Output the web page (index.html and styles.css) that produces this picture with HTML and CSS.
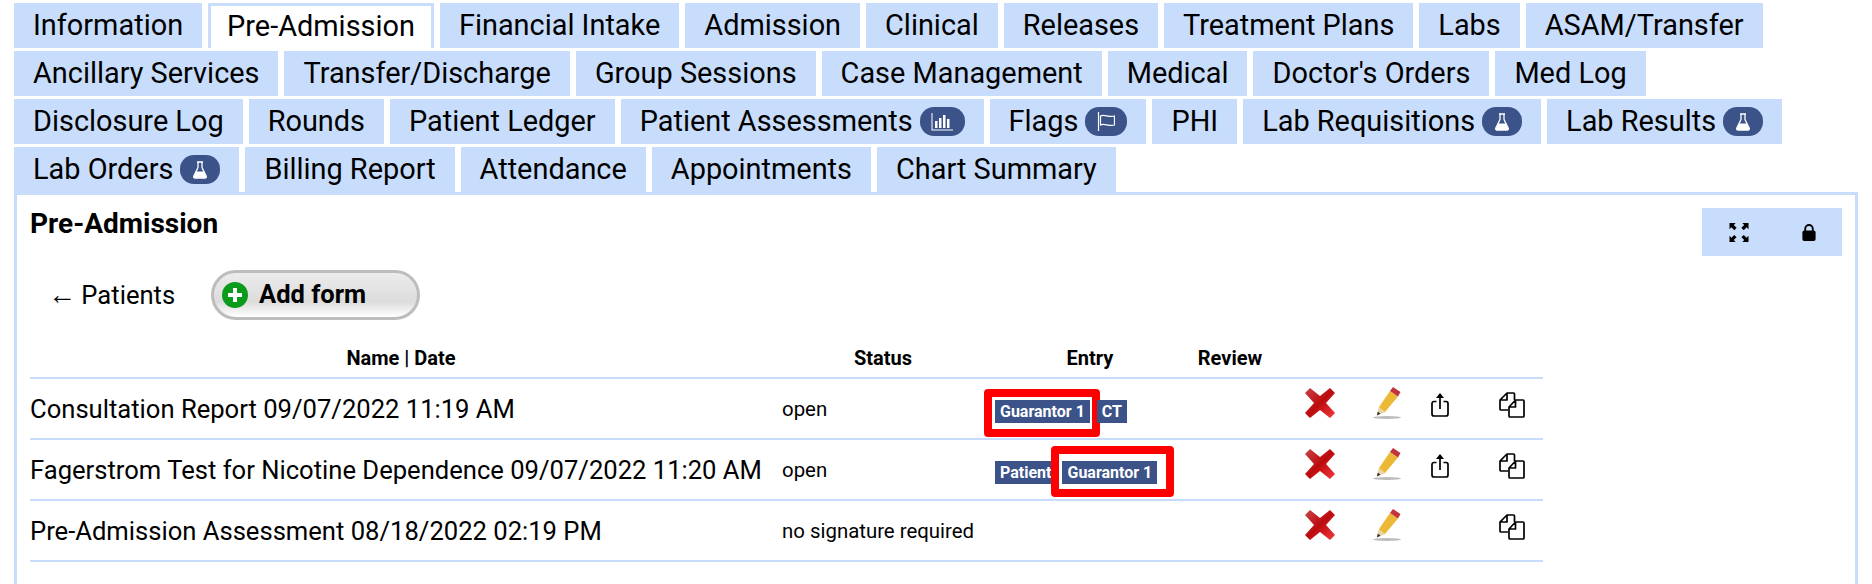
FILE: index.html
```html
<!DOCTYPE html>
<html lang="en">

<head>
    <meta charset="UTF-8">
    <link rel="stylesheet" href="styles.css">
    <title>Pre-Admission</title>
</head>

<body>
    <svg class="defs" width="0" height="0">
        <defs>
            <symbol id="flask" viewBox="0 0 16 18">
                <path d="M5 1h6M6 1.500v5L1.800 15c-.5 1 .1 2 1.200 2h10c1.100 0 1.700-1 1.200-2L10 6.500v-5" fill="none" stroke="#fff" stroke-width="1.300"/>
                <path d="M4.200 10.500h7.600l2.400 5c.3.800-.2 1.500-1.200 1.500H3c-1 0-1.500-.7-1.200-1.500z" fill="#fff"/>
            </symbol>
            <linearGradient id="redX" x1="0" y1="0" x2="1" y2="1">
                <stop offset="0" stop-color="#c9444a"/>
                <stop offset=".5" stop-color="#bb0b0e"/>
                <stop offset="1" stop-color="#f63a3e"/>
            </linearGradient>
            <symbol id="del" viewBox="0 0 30 30">
                <path d="M5 0l10 8 10-8 5 5-9 10 9 10-5 5-10-8-10 8-5-5 9-10-9-10z" fill="url(#redX)"/>
            </symbol>
            <symbol id="pencil" viewBox="0 0 28 32">
                <ellipse cx="14" cy="30.500" rx="14" ry="1.500" fill="#bbb"/>
                <path d="M17 4l8 5.500L12 25l-7.500 2.500L6 20z" fill="#ecb936"/>
                <path d="M20 0l7.500 5-2.500 4.500L17 4z" fill="#c2343c"/>
                <path d="M6 20l6 5-8 3.500z" fill="#e9d6ab"/>
                <path d="M4.800 24.500l2.700 2.200-3.700 1.800z" fill="#333"/>
            </symbol>
            <symbol id="share" viewBox="0 0 18 24">
                <path d="M5.500 8.500H3a2 2 0 0 0-2 2V21a2 2 0 0 0 2 2h12a2 2 0 0 0 2-2V10.500a2 2 0 0 0-2-2h-2.500M9 16V2" fill="none" stroke="#000" stroke-width="1.700"/>
                <path d="M9 0l4 5H5z"/>
            </symbol>
            <symbol id="copy" viewBox="0 0 26 26">
                <path d="M9 18H2a1 1 0 0 1-1-1V8l7-7h6.500a1 1 0 0 1 1 1v6M8 1v7H1" fill="none" stroke="#000" stroke-width="1.700" stroke-linejoin="round"/>
                <path d="M10 15l6.500-7H24a1 1 0 0 1 1 1v15a1 1 0 0 1-1 1H11a1 1 0 0 1-1-1zM16.500 8v7H10" fill="#fff" stroke="#000" stroke-width="1.700" stroke-linejoin="round"/>
            </symbol>
        </defs>
    </svg>

    <nav class="tabs">
        <a class="tab">Information</a>
        <a class="tab active">Pre-Admission</a>
        <a class="tab">Financial Intake</a>
        <a class="tab">Admission</a>
        <a class="tab">Clinical</a>
        <a class="tab">Releases</a>
        <a class="tab">Treatment Plans</a>
        <a class="tab">Labs</a>
        <a class="tab">ASAM/Transfer</a>
        <a class="tab">Ancillary Services</a>
        <a class="tab">Transfer/Discharge</a>
        <a class="tab">Group Sessions</a>
        <a class="tab">Case Management</a>
        <a class="tab">Medical</a>
        <a class="tab">Doctor's Orders</a>
        <a class="tab">Med Log</a>
        <a class="tab">Disclosure Log</a>
        <a class="tab">Rounds</a>
        <a class="tab">Patient Ledger</a>
        <a class="tab">Patient Assessments
            <span class="pill wide">
                <svg width="22" height="18" viewBox="0 0 22 18" fill="#fff">
                    <path d="M.5 0v17.500H22v-1H1.500V0z"/>
                    <rect x="4" y="8" width="2.500" height="7"/>
                    <rect x="8" y="5" width="2.500" height="10"/>
                    <rect x="12" y="2" width="2.500" height="13"/>
                    <rect x="16" y="6" width="2.500" height="9"/>
                </svg>
            </span>
        </a>
        <a class="tab">Flags
            <span class="pill flagpill">
                <svg width="18" height="19" viewBox="0 0 18 19" fill="none" stroke="#fff" stroke-width="1.200">
                    <path d="M1.500 0v19"/>
                    <path d="M3.500 4c4-2.500 8 2 14 0v9c-6 2-10-2.500-14 0z"/>
                </svg>
            </span>
        </a>
        <a class="tab">PHI</a>
        <a class="tab">Lab Requisitions <span class="pill"><svg width="16" height="18"><use href="#flask"/></svg></span></a>
        <a class="tab">Lab Results <span class="pill"><svg width="16" height="18"><use href="#flask"/></svg></span></a>
        <a class="tab">Lab Orders <span class="pill"><svg width="16" height="18"><use href="#flask"/></svg></span></a>
        <a class="tab">Billing Report</a>
        <a class="tab">Attendance</a>
        <a class="tab">Appointments</a>
        <a class="tab">Chart Summary</a>
    </nav>

    <main class="panel">
        <div class="panel-head">
            <h1>Pre-Admission</h1>
            <div class="tools">
                <svg width="20" height="19" viewBox="0 0 20 20">
                    <path d="M0 0h6.500l-2 2 3 3L5 7.500l-3-3-2 2zM20 0v6.500l-2-2-3 3L12.500 5l3-3-2-2zM0 20v-6.500l2 2 3-3L7.500 15l-3 3 2 2zM20 20h-6.500l2-2-3-3 2.500-2.500 3 3 2-2z"/>
                </svg>
                <svg width="14" height="17" viewBox="0 0 14 18">
                    <path d="M3 8V5a4 4 0 0 1 8 0v3" fill="none" stroke="#000" stroke-width="2"/>
                    <rect y="7" width="14" height="11" rx="2"/>
                </svg>
            </div>
        </div>

        <div class="actions">
            <a class="back"><span class="arrow">&larr;</span> Patients</a>
            <a class="add-btn">
                <svg width="26" height="26" viewBox="0 0 26 26">
                    <circle cx="13" cy="13" r="13" fill="#0a9a1c"/>
                    <path d="M11 6h4v5h5v4h-5v5h-4v-5H6v-4h5z" fill="#fff"/>
                </svg>
                Add form
            </a>
        </div>

        <table class="forms">
            <colgroup>
                <col class="c-name">
                <col class="c-status">
                <col class="c-entry">
                <col class="c-review">
                <col class="c-del">
                <col class="c-edit">
                <col class="c-share">
                <col class="c-copy">
            </colgroup>
            <thead>
                <tr>
                    <th>Name | Date</th>
                    <th>Status</th>
                    <th>Entry</th>
                    <th>Review</th>
                    <th></th>
                    <th></th>
                    <th></th>
                    <th></th>
                </tr>
            </thead>
            <tbody>
                <tr>
                    <td>Consultation Report 09/07/2022 11:19 AM</td>
                    <td class="status">open</td>
                    <td class="entry">
                        <span class="badge marked mark-one">Guarantor 1</span><span class="badge ct">CT</span>
                    </td>
                    <td></td>
                    <td class="ico"><svg class="soft" width="30" height="30"><use href="#del"/></svg></td>
                    <td class="ico"><svg class="soft" width="28" height="32"><use href="#pencil"/></svg></td>
                    <td class="ico"><svg class="line" width="18" height="24"><use href="#share"/></svg></td>
                    <td class="ico copy"><svg class="line" width="26" height="26"><use href="#copy"/></svg></td>
                </tr>
                <tr>
                    <td>Fagerstrom Test for Nicotine Dependence 09/07/2022 11:20 AM</td>
                    <td class="status">open</td>
                    <td class="entry">
                        <span class="badge">Patient</span><span class="badge marked mark-two">Guarantor 1</span>
                    </td>
                    <td></td>
                    <td class="ico"><svg class="soft" width="30" height="30"><use href="#del"/></svg></td>
                    <td class="ico"><svg class="soft" width="28" height="32"><use href="#pencil"/></svg></td>
                    <td class="ico"><svg class="line" width="18" height="24"><use href="#share"/></svg></td>
                    <td class="ico copy"><svg class="line" width="26" height="26"><use href="#copy"/></svg></td>
                </tr>
                <tr>
                    <td>Pre-Admission Assessment 08/18/2022 02:19 PM</td>
                    <td class="status">no signature required</td>
                    <td class="entry"></td>
                    <td></td>
                    <td class="ico"><svg class="soft" width="30" height="30"><use href="#del"/></svg></td>
                    <td class="ico"><svg class="soft" width="28" height="32"><use href="#pencil"/></svg></td>
                    <td class="ico"></td>
                    <td class="ico copy"><svg class="line" width="26" height="26"><use href="#copy"/></svg></td>
                </tr>
            </tbody>
        </table>
    </main>
</body>

</html>
```
FILE: styles.css
```css
html,
body {
    height: 100%;
}

body {
    margin: 0;
    padding: 3px 14px 0;
    box-sizing: border-box;
    display: flex;
    flex-direction: column;
    overflow: hidden;
    font-family: Roboto, "Liberation Sans", sans-serif;
    color: #000;
    background: #fff;
}

.defs {
    position: absolute;
}

.tabs {
    display: flex;
    flex-wrap: wrap;
    gap: 3px 6px;
}

.tab {
    height: 45px;
    box-sizing: border-box;
    display: flex;
    align-items: center;
    gap: 7px;
    padding: 0 19px 2px;
    font-size: 28.9px;
    white-space: nowrap;
    background: #c8ddfc;
}

.tab.active {
    background: #fff;
    border: 3px solid #c8ddfc;
    border-bottom: 0;
    padding: 0 16px 3px;
}

.pill {
    width: 40px;
    height: 29px;
    margin-top: 2px;
    display: flex;
    align-items: center;
    justify-content: center;
    border-radius: 14px;
    background: #3b5389;
}

.pill.wide {
    width: 45px;
}

.pill.flagpill {
    width: 42px;
}

.panel {
    flex: 1;
    border: 3px solid #c8ddfc;
    border-bottom: 0;
    padding: 13px 13px 0;
}

.panel-head {
    display: flex;
    justify-content: space-between;
    align-items: flex-start;
}

h1 {
    margin: -1px 0 0;
    font-size: 28px;
    font-weight: 700;
}

.tools {
    width: 140px;
    height: 48px;
    display: flex;
    align-items: center;
    justify-content: space-around;
    background: #c8ddfc;
}

.actions {
    display: flex;
    align-items: center;
    margin-top: 14px;
    padding-left: 18px;
}

.back {
    width: 163px;
    padding-bottom: 2px;
    font-size: 25.6px;
}

.arrow {
    margin-right: -1px;
    font-size: 28px;
}

.add-btn {
    width: 209px;
    height: 50px;
    box-sizing: border-box;
    display: flex;
    align-items: center;
    gap: 11px;
    padding: 0 0 2px 8px;
    font-size: 25.5px;
    font-weight: 700;
    border: 3px solid #bdbdbd;
    border-radius: 25px;
    background: linear-gradient(#ececec, #dcdcdc 65%, #fff);
}

.add-btn svg {
    margin-top: 2px;
}

.forms {
    width: 1513px;
    table-layout: fixed;
    border-collapse: collapse;
    font-size: 25.6px;
}

.c-name { width: 742px; }
.c-status { width: 222px; }
.c-entry { width: 192px; }
.c-review { width: 88px; }
.c-del { width: 92px; }
.c-edit { width: 42px; }
.c-share { width: 64px; }
.c-copy { width: 71px; }

.forms th {
    height: 58px;
    box-sizing: border-box;
    padding: 0 0 7px;
    vertical-align: bottom;
    font-size: 20px;
    font-weight: 700;
}

.forms tr {
    border-bottom: 2px solid #c8ddfc;
}

.forms td {
    height: 61px;
    box-sizing: border-box;
    padding: 0;
}

.forms .status {
    padding-left: 10px;
    font-size: 20.4px;
}

.forms .entry {
    padding: 5px 0 0 1px;
    white-space: nowrap;
    font-size: 0;
}

.badge {
    display: inline-block;
    position: relative;
    height: 23px;
    line-height: 23px;
    padding: 0 5px;
    font-size: 16px;
    font-weight: 700;
    color: #fff;
    background: #3b5389;
}

.badge.ct {
    margin-left: 7px;
}

.mark-two {
    margin-left: 6px;
}

.marked::after {
    content: "";
    position: absolute;
    border: 8px solid #f00;
    border-radius: 4px;
}

.mark-one::after {
    inset: -11px -10px -14px -11px;
}

.mark-two::after {
    inset: -15px -17px -13px -11px;
}

.ico {
    text-align: center;
}

.ico svg {
    display: block;
    margin: 0 auto;
}

.ico .soft {
    margin-top: -12px;
    filter: blur(.5px);
}

.ico .line {
    margin-top: -7px;
}

.forms .copy {
    padding-left: 8px;
}
```
